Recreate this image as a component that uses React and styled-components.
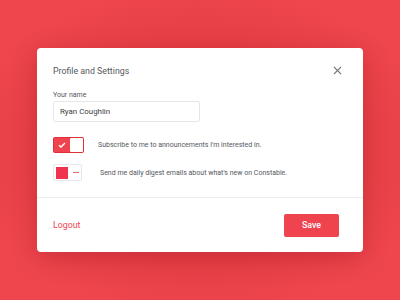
import React, { useState } from "react";
import styled, { createGlobalStyle } from "styled-components";

const red = "#ef4450";
const darkRed = "#e0303c";
const textGrey = "#54585e";

const GlobalStyle = createGlobalStyle`
  html, body {
    margin: 0;
    padding: 0;
    width: 400px;
    height: 300px;
    overflow: hidden;
  }
  body {
    font-family: Roboto, "Liberation Sans", Arial, sans-serif;
    -webkit-font-smoothing: antialiased;
  }
`;

const Backdrop = styled.div`
  width: 400px;
  height: 300px;
  background: radial-gradient(ellipse 60% 55% at 50% 50%, #d8323b 0%, #e23a42 45%, #ef464e 100%);
  display: flex;
  align-items: flex-start;
  justify-content: center;
  padding-top: 48px;
  box-sizing: border-box;
`;

const Card = styled.div`
  width: 326px;
  height: 204px;
  background: #fff;
  border-radius: 4px;
  box-shadow: 0 6px 24px rgba(120, 0, 10, 0.25);
  display: flex;
  flex-direction: column;
`;

const Body = styled.div`
  padding: 16px 16px 0 16px;
  flex: 1;
`;

const Header = styled.div`
  display: flex;
  align-items: center;
  justify-content: space-between;
  height: 14px;
  margin-bottom: 12px;
`;

const Title = styled.h2`
  margin: 0;
  font-size: 8.8px;
  font-weight: 400;
  color: ${textGrey};
`;

const CloseButton = styled.button`
  border: none;
  background: none;
  padding: 0;
  margin-right: 4px;
  width: 10px;
  height: 10px;
  display: flex;
  cursor: pointer;
`;

const Label = styled.label`
  display: block;
  font-size: 7px;
  line-height: 10px;
  color: ${textGrey};
  margin-bottom: 1px;
`;

const NameInput = styled.input`
  display: block;
  width: 147px;
  height: 21px;
  box-sizing: border-box;
  border: 1px solid #e6e6e8;
  border-radius: 2px;
  padding: 0 6px;
  font-family: inherit;
  font-size: 7.9px;
  font-weight: 400;
  color: #3a3d42;
  outline: none;
  margin-bottom: 14px;
`;

const OptionRow = styled.div`
  display: flex;
  align-items: center;
  height: 17px;
  margin-bottom: ${(p) => p.gap || 0}px;
`;

const OptionText = styled.span`
  font-size: 7px;
  color: ${textGrey};
  margin-left: ${(p) => p.indent}px;
`;

const SwitchOn = styled.button`
  width: 31px;
  height: 16px;
  padding: 1px;
  box-sizing: border-box;
  border: none;
  border-radius: 2px;
  background: ${darkRed};
  display: flex;
  align-items: stretch;
  cursor: pointer;
`;

const SwitchOnTrack = styled.span`
  flex: 1;
  display: flex;
  align-items: center;
  justify-content: center;
  background: ${red};
`;

const SwitchKnob = styled.span`
  width: 13px;
  background: #fff;
  border-radius: 1px;
`;

const SwitchOff = styled.button`
  width: 29px;
  height: 17px;
  padding: 2px;
  box-sizing: border-box;
  border: 1px solid #e8e8ea;
  border-radius: 2px;
  background: #fff;
  display: flex;
  align-items: center;
  cursor: pointer;
`;

const OffKnob = styled.span`
  width: 12px;
  height: 12px;
  background: #f0344f;
`;

const Dash = styled.span`
  width: 6px;
  height: 1.5px;
  background: #f06a74;
  margin-left: 5px;
`;

const Footer = styled.div`
  border-top: 1px solid #ececee;
  height: 55px;
  box-sizing: border-box;
  padding: 0 24px 0 16px;
  display: flex;
  align-items: center;
  justify-content: space-between;
`;

const LogoutLink = styled.a`
  font-size: 8.8px;
  color: ${red};
  text-decoration: none;
  cursor: pointer;
`;

const SaveButton = styled.button`
  width: 55px;
  height: 23px;
  border: none;
  border-radius: 2px;
  background: ${red};
  color: #fff;
  font-family: inherit;
  font-size: 8.8px;
  font-weight: 500;
  cursor: pointer;
`;

const CheckIcon = () => (
  <svg width="8" height="6" viewBox="0 0 8 6">
    <path d="M1 3.2 L3 5 L7 1" fill="none" stroke="#fff" strokeWidth="1.4" />
  </svg>
);

const CloseIcon = () => (
  <svg width="9" height="9" viewBox="0 0 9 9">
    <path d="M1 1 L8 8 M8 1 L1 8" stroke="#777c82" strokeWidth="1.1" />
  </svg>
);

export default function App() {
  const [name, setName] = useState("Ryan Coughlin");

  return (
    <>
      <GlobalStyle />
      <Backdrop>
        <Card>
          <Body>
            <Header>
              <Title>Profile and Settings</Title>
              <CloseButton aria-label="Close">
                <CloseIcon />
              </CloseButton>
            </Header>
            <Label>Your name</Label>
            <NameInput value={name} onChange={(e) => setName(e.target.value)} />
            <OptionRow gap={11}>
              <SwitchOn>
                <SwitchOnTrack>
                  <CheckIcon />
                </SwitchOnTrack>
                <SwitchKnob />
              </SwitchOn>
              <OptionText indent={14}>
                Subscribe to me to announcements I'm interested in.
              </OptionText>
            </OptionRow>
            <OptionRow>
              <SwitchOff>
                <OffKnob />
                <Dash />
              </SwitchOff>
              <OptionText indent={18}>
                Send me daily digest emails about what's new on Constable.
              </OptionText>
            </OptionRow>
          </Body>
          <Footer>
            <LogoutLink>Logout</LogoutLink>
            <SaveButton>Save</SaveButton>
          </Footer>
        </Card>
      </Backdrop>
    </>
  );
}
